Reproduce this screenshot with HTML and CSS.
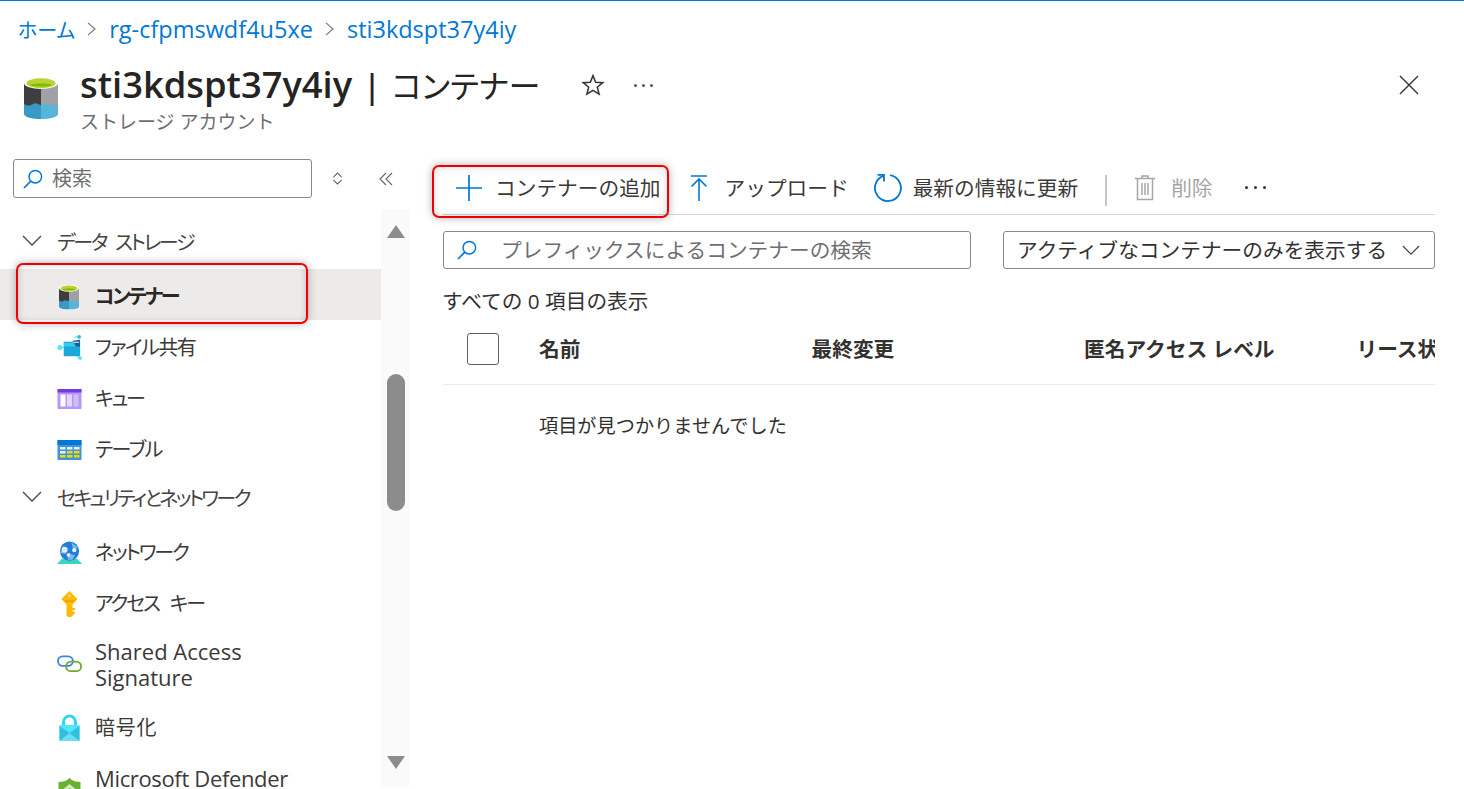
FILE: index.html
```html
<!DOCTYPE html>
<html lang="ja">
<head>
<meta charset="utf-8">
<title>コンテナー</title>
<link rel="stylesheet" href="styles.css">
</head>
<body>
<svg class="defs" width="0" height="0" aria-hidden="true">
  <defs>
    <symbol id="storage" viewBox="0 0 34 42">
      <path d="M0 6v31c0 3 8 5 17 5V6z" fill="#3999c6"/>
      <path d="M34 6v31c0 3-8 5-17 5V6z" fill="#59b4d9"/>
      <path d="M0 6v21c3 2 6 2 9 0 3-2 5 1 8 1V6z" fill="#3e3e3e"/>
      <path d="M34 6v21c-3 2-6 2-9 0-3-2-5 1-8 1V6z" fill="#a0a1a2"/>
      <ellipse cx="17" cy="6" rx="17" ry="6" fill="#fff"/>
      <ellipse cx="17" cy="6.300" rx="14.500" ry="5" fill="#b8d432"/>
      <path d="M6 8c3-2 19-2 22 0-3 2-19 2-22 0z" fill="#7fba00"/>
    </symbol>
    <symbol id="search" viewBox="0 0 20 20">
      <circle cx="12.300" cy="7.700" r="6.300" fill="none" stroke="#0078d4" stroke-width="1.500"/>
      <path d="M7.800 12.200 1 19" fill="none" stroke="#0078d4" stroke-width="1.700"/>
    </symbol>
    <symbol id="chev-down" viewBox="0 0 20 12">
      <path d="M1 1l9 9 9-9" fill="none" stroke="#444" stroke-width="1.300"/>
    </symbol>
    <symbol id="chev-right" viewBox="0 0 10 16">
      <path d="M1 1l8 7-8 7" fill="none" stroke="#777" stroke-width="1.300"/>
    </symbol>
  </defs>
</svg>

<div class="topline"></div>

<nav class="crumbs">
  <a class="crumb crumb-ja">ホーム</a>
  <svg class="crumb-sep"><use href="#chev-right"/></svg>
  <a class="crumb">rg-cfpmswdf4u5xe</a>
  <svg class="crumb-sep"><use href="#chev-right"/></svg>
  <a class="crumb">sti3kdspt37y4iy</a>
</nav>

<header class="head">
  <svg class="head-icon"><use href="#storage"/></svg>
  <div class="head-text">
    <div class="head-row">
      <h1 class="title">sti3kdspt37y4iy<span class="title-bar">|</span><span class="title-ja">コンテナー</span></h1>
      <svg class="star" viewBox="0 0 24 24"><path d="M12 2.600l2.700 6.600 7.100.5-5.500 4.500 1.800 6.900-6.100-3.800-6.100 3.800 1.800-6.900-5.500-4.500 7.100-.5z" fill="none" stroke="#333" stroke-width="1.500"/></svg>
      <span class="head-dots"><i></i><i></i><i></i></span>
    </div>
    <div class="subtitle">ストレージ アカウント</div>
  </div>
  <svg class="close" viewBox="0 0 20 20"><path d="M1 1l18 18M19 1 1 19" fill="none" stroke="#333" stroke-width="1.400"/></svg>
</header>

<div class="layout">
  <aside class="side">
    <div class="side-tools">
      <div class="side-search">
        <svg class="side-search-icon"><use href="#search"/></svg>
        <span class="side-search-text">検索</span>
      </div>
      <svg class="sort-icon" viewBox="0 0 12 14"><path d="M1.500 5.500 6 1l4.500 4.500M1.500 8.500 6 13l4.500-4.500" fill="none" stroke="#555" stroke-width="1.100"/></svg>
      <svg class="collapse-icon" viewBox="0 0 14 14"><path d="M7 1 1 7l6 6M13 1 7 7l6 6" fill="none" stroke="#666" stroke-width="1.100"/></svg>
    </div>

    <div class="side-body">
      <div class="menu">
        <div class="group group-first"><svg class="group-chev"><use href="#chev-down"/></svg><span>データ ストレージ</span></div>

        <div class="item item-active">
          <svg class="item-icon icon-small-cyl"><use href="#storage"/></svg>
          <span class="item-label ls-tight">コンテナー</span>
          <span class="mark mark-nav"></span>
        </div>

        <div class="item">
          <svg class="item-icon icon-share" viewBox="0 0 26 26">
            <path d="M2 13 7 13M18 3l3-2M21 22l2 2" stroke="#50e6ff" stroke-width="1.200" fill="none"/>
            <circle cx="3" cy="13" r="2.600" fill="#50e6ff"/>
            <circle cx="23" cy="2" r="2" fill="#32bedd"/>
            <circle cx="24" cy="24" r="2" fill="#50e6ff"/>
            <path d="M7 7h10l2 3h5v12H7z" fill="#1ba8d8"/>
            <path d="M7 8h10l3 4H7z" fill="#3cc8ec"/>
            <path d="M16 6l8-1v7h-4z" fill="#1b5e93"/>
            <path d="M17 7h6v1h-6z" fill="#fff"/>
          </svg>
          <span class="item-label ls-mid">ファイル共有</span>
        </div>

        <div class="item">
          <svg class="item-icon" viewBox="0 0 24 20">
            <rect y="0" width="24" height="20" rx="1" fill="#b796f9"/>
            <rect y="0" width="24" height="3.500" fill="#773adc"/>
            <rect x="3" y="5.500" width="5" height="12" fill="#fff"/>
            <rect x="9.500" y="5.500" width="5" height="12" fill="#e4d7fb"/>
            <rect x="16" y="5.500" width="5" height="12" fill="#d2bdf7"/>
          </svg>
          <span class="item-label ls-tight">キュー</span>
        </div>

        <div class="item">
          <svg class="item-icon" viewBox="0 0 24 20">
            <rect width="24" height="20" rx="1" fill="#3a96dd"/>
            <rect width="24" height="5" fill="#0078d4"/>
            <g fill="#ffd400">
              <rect x="9.500" y="11" width="5.500" height="2.500"/><rect x="16.500" y="11" width="5.500" height="2.500"/>
              <rect x="2.500" y="15" width="5.500" height="2.500"/><rect x="9.500" y="15" width="5.500" height="2.500"/><rect x="16.500" y="15" width="5.500" height="2.500"/>
            </g>
            <g fill="#e8f2fc">
              <rect x="2.500" y="7" width="5.500" height="2.500"/><rect x="9.500" y="7" width="5.500" height="2.500"/><rect x="16.500" y="7" width="5.500" height="2.500"/>
              <rect x="2.500" y="11" width="5.500" height="2.500"/>
            </g>
          </svg>
          <span class="item-label ls-mid">テーブル</span>
        </div>

        <div class="group group-second"><svg class="group-chev"><use href="#chev-down"/></svg><span>セキュリティとネットワーク</span></div>

        <div class="item">
          <svg class="item-icon icon-net" viewBox="0 0 26 24">
            <path d="M5 18h16l5 5.500H0z" fill="#3cd4c0"/>
            <circle cx="13" cy="10" r="10" fill="#1f7fd6"/>
            <path d="M6 5l5 2-2 6-6-1zM15 1l7 5-5 3zM12 13l7 1-3 5-5 0z" fill="#7bb8ee"/>
            <circle cx="8" cy="8.500" r="3" fill="#e3eefb"/>
            <circle cx="18" cy="9" r="2.300" fill="#e3eefb"/>
            <circle cx="12" cy="14" r="2" fill="#e3eefb"/>
          </svg>
          <span class="item-label ls-tight">ネットワーク</span>
        </div>

        <div class="item item-key">
          <svg class="item-icon icon-key" viewBox="0 0 16 26">
            <path d="M8 0l8 8-5 5.500V17h2.500v2H11v1.500h2v2.200L9.500 26h-3L5 24.500V13.500L0 8z" fill="#ffb900"/>
            <path d="M3.500 9.500h9v1.400h-9z" fill="#f29200"/>
            <circle cx="8" cy="4.800" r="1.300" fill="#ffe38a"/>
          </svg>
          <span class="item-label ls-key">アクセス キー</span>
        </div>

        <div class="item item-sas">
          <svg class="item-icon" viewBox="0 0 26 18">
            <rect x="1" y="1" width="15.500" height="10" rx="5" fill="none" stroke="#3a86e0" stroke-width="1.900"/>
            <rect x="9.500" y="6.500" width="15.500" height="10" rx="5" fill="none" stroke="#6bab2f" stroke-width="1.900"/>
          </svg>
          <span class="item-label label-latin">Shared Access Signature</span>
        </div>

        <div class="item item-lock">
          <svg class="item-icon icon-lock" viewBox="0 0 20 26">
            <path d="M4 11V7a6 6 0 0 1 12 0v4" fill="none" stroke="#32d4f5" stroke-width="3"/>
            <rect y="10" width="20" height="16" rx="1" fill="#50e6ff"/>
            <path d="M0 11l10 7 10-7v15H0z" fill="#32bedd"/>
            <path d="M0 26l10-8 10 8z" fill="#6ddcf5"/>
          </svg>
          <span class="item-label ls-wide">暗号化</span>
        </div>

        <div class="item item-def">
          <svg class="item-icon icon-def" viewBox="0 0 24 26"><path d="M12 0c3 3 7 4 11 4v9c0 6-6 10-11 13C7 23 1 19 1 13V4c4 0 8-1 11-4z" fill="#6bb12f"/><path d="M12 6l6 5-2 2-4-3-4 3-2-2z" fill="#d5ecc0"/></svg>
          <span class="item-label label-latin label-def">Microsoft Defender for Cloud</span>
        </div>
      </div>

      <div class="scrollbar">
        <span class="arrow-up"></span>
        <span class="thumb"></span>
        <span class="arrow-down"></span>
      </div>
    </div>
  </aside>

  <main class="main">
    <div class="toolbar">
      <button class="cmd cmd-add">
        <svg class="cmd-plus" viewBox="0 0 26 26"><path d="M13 0v26M0 13h26" stroke="#0078d4" stroke-width="1.700" fill="none"/></svg>
        <span>コンテナーの追加</span>
        <span class="mark mark-add"></span>
      </button>
      <button class="cmd cmd-upload">
        <svg class="cmd-up" viewBox="0 0 18 26"><path d="M1 1h16M9 26V4M1.500 11.500 9 4l7.500 7.500" stroke="#0078d4" stroke-width="1.600" fill="none"/></svg>
        <span>アップロード</span>
      </button>
      <button class="cmd cmd-refresh">
        <svg class="cmd-ref" viewBox="0 0 28 28"><path d="M16 1.200A13 13 0 1 1 9.500 1.800" stroke="#0078d4" stroke-width="1.800" fill="none"/><path d="M3.500.8H10V7.500" stroke="#0078d4" stroke-width="1.800" fill="none"/></svg>
        <span>最新の情報に更新</span>
      </button>
      <span class="cmd-div"></span>
      <button class="cmd cmd-del">
        <svg class="cmd-trash" viewBox="0 0 20 26"><path d="M7 3V1h6v2M0 3.500h20M2.500 4v20.500h15V4M7 8v12M10 8v12M13 8v12" stroke="#a6a6a6" stroke-width="1.500" fill="none"/></svg>
        <span>削除</span>
      </button>
      <span class="cmd-more"><i></i><i></i><i></i></span>
    </div>

    <div class="filters">
      <div class="filter-search">
        <svg class="filter-icon"><use href="#search"/></svg>
        <span class="filter-text">プレフィックスによるコンテナーの検索</span>
      </div>
      <div class="filter-select">
        <span class="filter-text">アクティブなコンテナーのみを表示する</span>
        <svg class="select-chev"><use href="#chev-down"/></svg>
      </div>
    </div>

    <p class="count">すべての 0 項目の表示</p>

    <div class="table-head">
      <span class="checkbox"></span>
      <span class="th">名前</span>
      <span class="th">最終変更</span>
      <span class="th">匿名アクセス レベル</span>
      <span class="th">リース状態</span>
    </div>

    <p class="empty">項目が見つかりませんでした</p>
  </main>
</div>
</body>
</html>
```

FILE: styles.css
```css
* { box-sizing: border-box; }
html, body { margin: 0; height: 100%; }
body {
  width: 1464px;
  height: 789px;
  overflow: hidden;
  background: #fff;
  color: #323130;
  font-family: "Open Sans", "Noto Sans CJK JP", sans-serif;
  font-size: 20.700px;
  display: flex;
  flex-direction: column;
}
.defs { position: absolute; }
.topline { height: 1px; background: #0078d4; flex: none; }

.crumbs {
  flex: none;
  height: 51px;
  padding: 5px 0 0 18px;
  display: flex;
  align-items: center;
  font-feature-settings: "palt";
}
.crumb { color: #0078d4; font-size: 23.500px; white-space: nowrap; }
.crumb-ja { font-size: 20px; }
.crumb-sep { width: 9px; height: 14px; margin: 0 13px 0 12px; }

.head {
  flex: none;
  height: 107px;
  display: flex;
  align-items: flex-start;
  padding: 25px 45px 0 24px;
}
.head-icon { width: 34px; height: 42px; flex: none; }
.head-text { margin-left: 22px; flex: 1; margin-top: -14px; }
.head-row { display: flex; align-items: center; height: 44px; }
.title {
  margin: 0;
  font-size: 36.300px;
  font-weight: 600;
  color: #252423;
  white-space: nowrap;
  line-height: 44px;
  font-feature-settings: "palt";
}
.title-bar { font-weight: 600; margin: 0 11px; font-size: 32px; }
.title-ja { font-weight: 400; font-size: 31.700px; }
.star { width: 24px; height: 24px; margin-left: 41px; }
.head-dots { display: flex; gap: 5px; margin-left: 29px; }
.head-dots i { width: 3px; height: 3px; border-radius: 50%; background: #555; }
.subtitle { font-size: 19px; color: #6f6f6f; line-height: 24px; margin-top: 3px; }
.close { width: 20px; height: 20px; flex: none; margin-top: -2px; }

.layout { flex: 1; display: flex; min-height: 0; }

.side {
  width: 410px;
  flex: none;
  display: flex;
  flex-direction: column;
  min-height: 0;
  font-size: 20px;
  font-feature-settings: "palt";
}
.side-tools { flex: none; height: 58px; padding-left: 13px; display: flex; align-items: flex-start; }
.side-search {
  width: 299px;
  height: 39px;
  border: 1px solid #8a8886;
  border-radius: 3px;
  display: flex;
  align-items: center;
  padding: 0 0 0 9px;
}
.side-search-icon { width: 20px; height: 20px; flex: none; }
.side-search-text { margin: -2px 0 0 9px; color: #6f6f6f; }
.sort-icon { width: 11px; height: 13px; margin: 13px 0 0 20px; }
.collapse-icon { width: 14px; height: 14px; margin: 13px 0 0 36px; }

.side-body { flex: 1; display: flex; min-height: 0; }
.menu { flex: 1; min-width: 0; overflow: hidden; }
.group {
  display: flex;
  align-items: center;
  color: #444;
  white-space: nowrap;
  padding-left: 22px;
}
.group-first { height: 52px; padding-bottom: 4px; letter-spacing: -2.300px; word-spacing: 6px; }
.group-second { height: 52px; padding-bottom: 4px; letter-spacing: -2.700px; }
.group-chev { width: 20px; height: 12px; margin-right: 15px; flex: none; }

.item {
  position: relative;
  height: 51px;
  display: flex;
  align-items: center;
  padding: 4px 0 0 57px;
  color: #3b3a39;
}
.item-active { background: #edebe9; font-weight: 700; color: #292827; }
.item-key { height: 52px; }
.item-sas { height: 72px; padding-top: 0; }
.item-lock { height: 52px; }
.item-def { height: 74px; }
.item-label { margin-left: 13px; line-height: 26px; width: 215px; }
.ls-tight { letter-spacing: -2.200px; }
.ls-mid { letter-spacing: -1.500px; }
.ls-key { letter-spacing: -2.200px; word-spacing: 8px; }
.ls-wide { letter-spacing: .8px; }
.label-latin { font-size: 22px; }
.label-def { letter-spacing: -.35px; }
.item-icon { width: 25px; height: 20px; flex: none; overflow: visible; }
.icon-small-cyl { width: 20px; height: 26px; margin: 0 3px 0 2px; }
.icon-share { height: 25px; }
.icon-net { height: 24px; }
.icon-key { height: 26px; }
.icon-lock { height: 26px; }
.icon-def { height: 26px; }

.mark {
  position: absolute;
  border: 2px solid #f00000;
  border-radius: 7px;
  box-shadow: 0 0 8px rgba(0, 0, 0, .3), inset 0 0 7px rgba(0, 0, 0, .18);
  pointer-events: none;
}
.mark-nav { left: 16px; top: -6px; width: 292px; height: 61px; }
.mark-add { left: -24px; top: 4px; width: 237px; height: 53px; }

.scrollbar {
  width: 29px;
  flex: none;
  background: #fafafa;
  position: relative;
  height: 576px;
  margin-top: -7px;
}
.thumb {
  position: absolute;
  left: 6px;
  top: 164px;
  width: 18px;
  height: 137px;
  background: #8c8c8c;
  border-radius: 9px;
}
.arrow-up, .arrow-down {
  position: absolute;
  left: 6px;
  width: 0;
  height: 0;
  border-left: 9px solid transparent;
  border-right: 9px solid transparent;
}
.arrow-up { top: 15px; border-bottom: 13px solid #8c8c8c; }
.arrow-down { top: 546px; border-top: 13px solid #8c8c8c; }

.main { flex: 1; min-width: 0; padding: 0 29px 0 33px; }

.toolbar {
  height: 54px;
  margin-top: 2px;
  border-bottom: 1px solid #d6d6d6;
  display: flex;
  align-items: center;
}
.cmd {
  position: relative;
  height: 54px;
  border: 0;
  background: none;
  padding: 0 0 2px;
  margin: 0;
  display: flex;
  align-items: center;
  font: inherit;
  color: #3b3a39;
  white-space: nowrap;
}
.cmd svg { position: relative; top: 1px; }
.cmd-add { margin-left: 13px; }
.cmd-plus { width: 26px; height: 26px; margin-right: 13px; }
.cmd-upload { margin-left: 29px; }
.cmd-up { width: 18px; height: 26px; margin-right: 17px; }
.cmd-refresh { margin-left: 25px; }
.cmd-ref { width: 28px; height: 28px; margin-right: 11px; }
.cmd-div { width: 2px; height: 31px; background: #c8c6c4; margin: 5px 0 0 27px; }
.cmd-del { margin-left: 28px; color: #a6a6a6; }
.cmd-trash { width: 20px; height: 26px; margin-right: 16px; }
.cmd-more { display: flex; gap: 6px; margin-left: 32px; }
.cmd-more i { width: 3px; height: 3px; border-radius: 50%; background: #333; }

.filters { display: flex; justify-content: space-between; margin-top: 16px; }
.filter-search, .filter-select {
  height: 38px;
  border: 1px solid #8a8886;
  border-radius: 3px;
  display: flex;
  align-items: center;
  white-space: nowrap;
}
.filter-text { margin-top: -2px; }
.filter-search { width: 528px; padding-left: 13px; color: #6f6f6f; }
.filter-icon { width: 20px; height: 20px; margin-right: 24px; flex: none; }
.filter-select { width: 432px; padding-left: 13px; color: #323130; }
.select-chev { width: 18px; height: 11px; margin-left: 15px; flex: none; }

.count { margin: 19px 0 0 -1px; line-height: 26px; color: #323130; }

.table-head {
  display: grid;
  grid-template-columns: 96px repeat(4, 272.500px);
  align-items: center;
  height: 71px;
  border-bottom: 1px solid #edebe9;
  overflow: hidden;
}
.checkbox {
  width: 32px;
  height: 32px;
  margin-left: 24px;
  margin-top: -1px;
  border: 1px solid #605e5c;
  border-radius: 3px;
}
.th { font-weight: 700; color: #323130; white-space: nowrap; margin-top: -2px; }
.empty { margin: 28px 0 0 96px; font-size: 19.200px; line-height: 26px; color: #323130; }
```
